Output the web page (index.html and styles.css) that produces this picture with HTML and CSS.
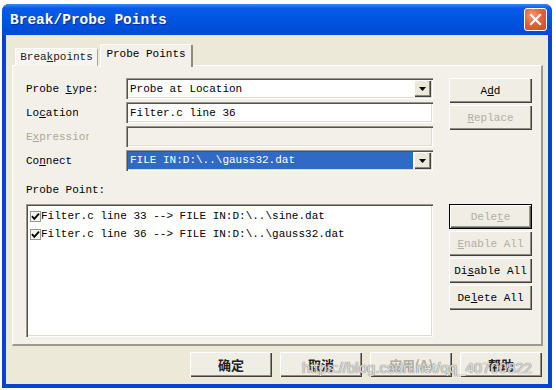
FILE: index.html
```html
<!DOCTYPE html>
<html lang="en">
<head>
    <meta charset="UTF-8">
    <meta name="viewport" content="width=device-width, initial-scale=1.0">
    <title>Break/Probe Points</title>
    <link rel="stylesheet" href="styles.css">
</head>
<body>
    <div class="window">
        <div class="titlebar">
            <span class="title">Break/Probe Points</span>
            <button class="close" aria-label="Close">
                <svg width="13" height="13" viewBox="0 0 13 13">
                    <path d="M2 2 L11 11 M11 2 L2 11" stroke="#fff" stroke-width="2.2" stroke-linecap="square"/>
                </svg>
            </button>
        </div>

        <div class="client">
            <div class="tabs">
                <div class="tab">Brea<u>k</u>points</div>
                <div class="tab tab-active">Probe Points</div>
            </div>

            <div class="panel">
                <div class="panel-top">
                    <div class="form">
                        <label class="label"><span>Probe <u>t</u>ype:</span></label>
                        <div class="field combo">
                            <span class="value">Probe at Location</span>
                            <span class="drop">
                                <svg width="7" height="4" viewBox="0 0 7 4"><polygon points="0,0 7,0 3.5,4" fill="#000"/></svg>
                            </span>
                        </div>

                        <label class="label label-clip-short"><span>Lo<u>c</u>ation</span></label>
                        <div class="field">
                            <span class="value">Filter.c line 36</span>
                        </div>

                        <label class="label label-disabled label-clip-long"><span>E<u>x</u>pression</span></label>
                        <div class="field field-disabled"></div>

                        <label class="label"><span>Co<u>n</u>nect</span></label>
                        <div class="field combo">
                            <span class="value value-selected">FILE IN:D:\..\gauss32.dat</span>
                            <span class="drop">
                                <svg width="7" height="4" viewBox="0 0 7 4"><polygon points="0,0 7,0 3.5,4" fill="#000"/></svg>
                            </span>
                        </div>
                    </div>

                    <div class="side">
                        <button class="btn">A<u>d</u>d</button>
                        <button class="btn" disabled><u>R</u>eplace</button>
                    </div>
                </div>

                <div class="pp-label">Probe Point:</div>

                <div class="panel-bottom">
                    <div class="list">
                        <div class="item">
                            <span class="check">
                                <svg width="11" height="11" viewBox="0 0 11 11"><path d="M2 5.2 L4.3 7.8 L9 2.6" fill="none" stroke="#000" stroke-width="1.8"/></svg>
                            </span><span>Filter.c line 33 --&gt; FILE IN:D:\..\sine.dat</span>
                        </div>
                        <div class="item">
                            <span class="check">
                                <svg width="11" height="11" viewBox="0 0 11 11"><path d="M2 5.2 L4.3 7.8 L9 2.6" fill="none" stroke="#000" stroke-width="1.8"/></svg>
                            </span><span>Filter.c line 36 --&gt; FILE IN:D:\..\gauss32.dat</span>
                        </div>
                    </div>

                    <div class="side">
                        <button class="btn btn-default" disabled>Dele<u>t</u>e</button>
                        <button class="btn" disabled><u>E</u>nable All</button>
                        <button class="btn">Di<u>s</u>able All</button>
                        <button class="btn">De<u>l</u>ete All</button>
                    </div>
                </div>
            </div>

            <div class="actions">
                <button class="btn btn-cn">确定</button>
                <button class="btn btn-cn">取消</button>
                <button class="btn btn-cn" disabled>应用(A)</button>
                <button class="btn btn-cn">帮助</button>
            </div>
        </div>
    </div>

    <div class="watermark">https://blog.csdn.net/qq_40700822</div>
</body>
</html>
```

FILE: styles.css
```css
body {
    margin: 0;
    padding: 0;
    background: #fff;
    font-family: "Liberation Mono", "DejaVu Sans Mono", monospace;
    font-size: 11px;
    color: #000;
}

.window {
    position: relative;
    margin: 4px 0 0 2px;
    width: 550px;
    height: 384px;
    box-sizing: border-box;
    background: #0842d4;
    border-radius: 7px 7px 0 0;
    display: flex;
    flex-direction: column;
}

.titlebar {
    height: 31px;
    flex-shrink: 0;
    display: flex;
    align-items: center;
    justify-content: space-between;
    padding: 0 5px 0 8px;
    border-radius: 7px 7px 0 0;
    background: linear-gradient(#3d8af5 0, #0a5ce8 4px, #0054e0 16px, #0049d6 100%);
}

.title {
    color: #fff;
    font-weight: bold;
    font-size: 14.5px;
    text-shadow: 1px 1px 0 #0a2f8c;
}

.close {
    width: 23px;
    height: 23px;
    padding: 0;
    border: 1px solid #fff;
    border-radius: 3px;
    background: radial-gradient(circle at 35% 30%, #f39a78 0, #e2633a 45%, #cc4a22 100%);
    display: flex;
    align-items: center;
    justify-content: center;
}

.client {
    flex-grow: 1;
    margin: 0 4px 4px 4px;
    background: #ece9d8;
    padding: 9px 5px 0 6px;
    display: flex;
    flex-direction: column;
}

/* tabs */
.tabs {
    display: flex;
    align-items: flex-end;
    gap: 2px;
    padding-left: 3px;
    height: 22px;
}

.tab {
    position: relative;
    height: 18px;
    box-sizing: border-box;
    width: 83px;
    line-height: 17px;
    text-align: center;
    background: #f6f5f0;
    border-top: 1px solid #fff;
    border-left: 1px solid #fff;
    border-right: 1px solid #a9a69a;
    border-radius: 2px 2px 0 0;
    color: #222;
}

.tab-active {
    z-index: 1;
    width: 93px;
    height: 23px;
    margin-bottom: -1px;
    line-height: 19px;
    background: #f2f0e8;
    border-right: 2px solid #8f8c80;
    color: #000;
}

.panel {
    margin-top: -1px;
    height: 281px;
    box-sizing: border-box;
    background: #f2f0e8;
    border-top: 1px solid #fff;
    border-left: 1px solid #fff;
    border-right: 2px solid #9c998d;
    border-bottom: 2px solid #9c998d;
    padding: 12px 9px 0 13px;
}

.panel-top,
.panel-bottom {
    display: flex;
    align-items: flex-start;
}

.form {
    display: grid;
    grid-template-columns: 100px 307px;
    grid-auto-rows: 21px;
    row-gap: 3px;
}

.label {
    display: flex;
    align-items: center;
    white-space: pre;
    overflow: hidden;
}

.label-clip-short {
    width: 52px;
}

.label-clip-long {
    width: 63px;
}

.label-disabled {
    color: #aca899;
}

.field {
    position: relative;
    display: flex;
    align-items: center;
    background: #fff;
    box-shadow: inset 1px 1px 0 #9a978b, inset 2px 2px 0 #55534c, inset -1px -1px 0 #fff, inset -2px -2px 0 #dedbd0;
    padding: 2px;
    box-sizing: border-box;
}

.field-disabled {
    background: #f2f0e8;
}

.value {
    flex-grow: 1;
    padding-left: 2px;
    white-space: nowrap;
    overflow: hidden;
}

.value-selected {
    background: #316ac5;
    color: #fff;
    align-self: stretch;
    line-height: 16px;
    margin-right: 1px;
}

.drop {
    width: 17px;
    align-self: stretch;
    display: flex;
    align-items: center;
    justify-content: center;
    background: #ece9d8;
    box-shadow: inset 1px 1px 0 #fff, inset -1px -1px 0 #404040, inset -2px -2px 0 #8a877c;
}

.side {
    margin-left: 16px;
    display: flex;
    flex-direction: column;
    gap: 2px;
}

.btn {
    width: 83px;
    height: 25px;
    padding: 0;
    border: none;
    background: #efede4;
    font-family: "Liberation Mono", "DejaVu Sans Mono", monospace;
    font-size: 11px;
    color: #000;
    box-shadow: inset 1px 1px 0 #fff, inset -1px -1px 0 #404040, inset -2px -2px 0 #8f8c81;
}

.btn:disabled {
    color: #b3afa2;
}

.btn-default {
    border: 1px solid #000;
    box-shadow: inset 1px 1px 0 #fff, inset -1px -1px 0 #555, inset -2px -2px 0 #9a978b;
}

.pp-label {
    margin: 12px 0 7px;
    line-height: 14px;
}

.list {
    width: 407px;
    height: 133px;
    box-sizing: border-box;
    background: #fff;
    box-shadow: inset 1px 1px 0 #9a978b, inset 2px 2px 0 #55534c, inset -1px -1px 0 #fff, inset -2px -2px 0 #dedbd0;
    padding: 3px 2px 2px 4px;
}

.item {
    height: 18px;
    display: flex;
    align-items: center;
    white-space: nowrap;
}

.check {
    width: 11px;
    height: 11px;
    box-sizing: border-box;
    border: 1px solid #9a978b;
    background: #f4f4f0;
    display: flex;
}

.check svg {
    margin: -1px;
}

.actions {
    margin-top: 6px;
    display: flex;
    justify-content: flex-end;
    gap: 8px;
    padding-right: 1px;
}

.btn-cn {
    width: 82px;
    font-family: "Noto Sans CJK SC", sans-serif;
    font-size: 13px;
    font-weight: bold;
    color: #222;
}

.watermark {
    position: absolute;
    left: 302px;
    top: 359px;
    font-family: "Liberation Sans", Arial, sans-serif;
    font-size: 15px;
    color: rgba(255, 255, 255, 0.75);
    text-shadow: 0 0 1px #777, 0 0 1px #777;
}
```
